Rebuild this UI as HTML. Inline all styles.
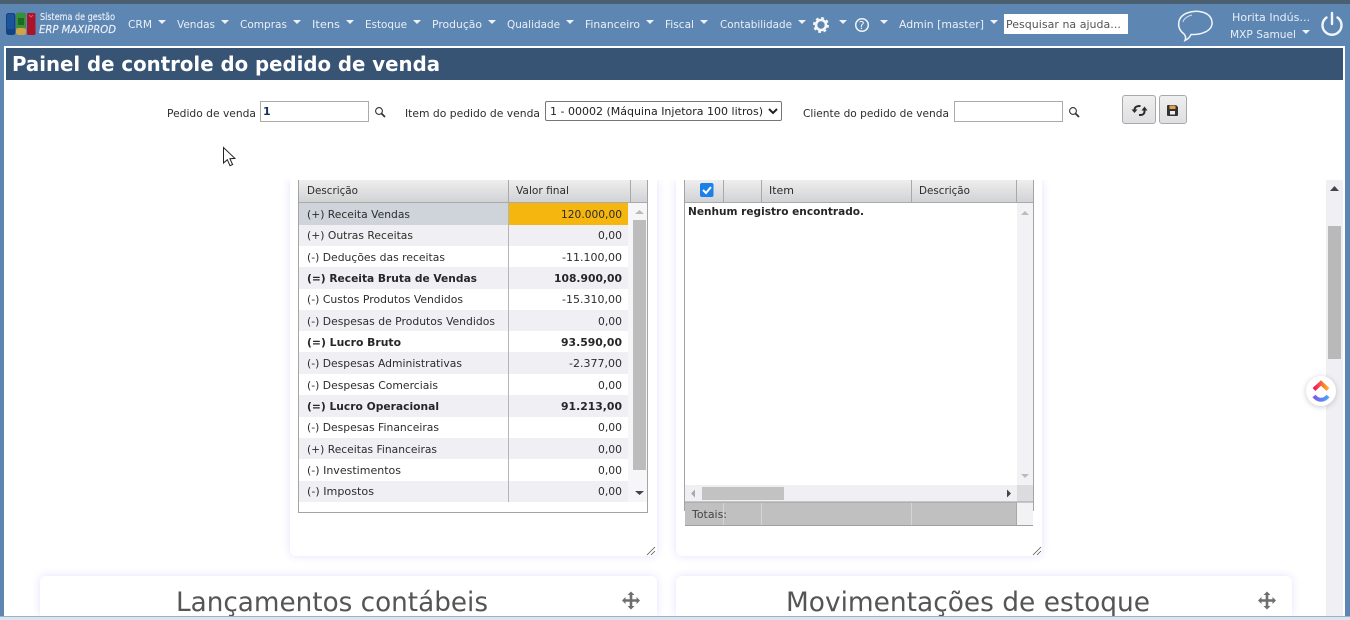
<!DOCTYPE html>
<html lang="pt-BR"><head><meta charset="utf-8"><title>Painel de controle do pedido de venda</title>
<style>
html,body{margin:0;padding:0;width:1350px;height:620px;overflow:hidden;background:#fff;font-family:"DejaVu Sans","Liberation Sans",sans-serif}
.a{position:absolute}
#nav{left:0;top:0;width:1350px;height:620px;background:#5e86b3}
#top{left:0;top:0;width:1350px;height:4px;background:#4a6070}
#main{left:4px;top:46px;width:1341px;height:570px;background:#fff}
#title{left:6px;top:48px;width:1337px;height:32px;background:#385474}
#foot{left:0;top:616px;width:1350px;height:4px;background:#dbe4ef;border-top:1px solid #9fb0c4;box-sizing:border-box}
#clip{left:4px;top:180px;width:1322px;height:436px;overflow:hidden;contain:paint}
.p{background:#fff;box-shadow:0 0 9px rgba(110,110,255,.2);position:absolute}
input,select{position:absolute;box-sizing:border-box;margin:0;font-family:"DejaVu Sans",sans-serif;font-size:11px;color:#222;background:#fff}
input{border:1px solid #aaa;padding:0 2px;outline:0}
svg{position:absolute;left:0;top:0}
text{font-family:"DejaVu Sans",sans-serif;font-size:11px;fill:#2c2c2c}
.n text,text.n{fill:#e9eff6}
.b{font-weight:bold;fill:#262626}
.btn{position:absolute;top:95px;height:29px;box-sizing:border-box;background:linear-gradient(#efeff0,#dfdfe1);border:1px solid #a9a9a9;border-radius:3px}
</style></head><body>
<div class="a" id="nav"></div><div class="a" id="top"></div><div class="a" id="main"></div><div class="a" id="title"></div>
<div class="a" id="clip">
<div class="p" style="left:286px;top:0;width:367px;height:376px;border-radius:0 0 6px 6px"></div>
<div class="p" style="left:672px;top:0;width:366px;height:376px;border-radius:0 0 6px 6px"></div>
<div class="p" style="left:36px;top:396px;width:617px;height:40px;border-radius:6px 6px 0 0"></div>
<div class="p" style="left:672px;top:396px;width:616px;height:40px;border-radius:6px 6px 0 0"></div>
</div>
<input style="left:260px;top:101px;width:109px;height:21px;color:#14315a;font-weight:bold" value="1">
<input style="left:954px;top:101px;width:109px;height:21px" value="">
<select style="left:545px;top:101px;width:237px;height:20px;border:1px solid #767676;border-radius:2px;padding:0"><option>1 - 00002 (Máquina Injetora 100 litros)</option></select>
<input style="left:1004px;top:14px;width:124px;height:20px;border:0;padding:0 2px;letter-spacing:.02px;color:#555" value="Pesquisar na ajuda...">
<div class="btn" style="left:1122px;width:34px"></div><div class="btn" style="left:1159px;width:28px"></div>
<div class="a" id="foot"></div>
<svg width="1350" height="620" viewBox="0 0 1350 620">
<defs><linearGradient id="h" x1="0" y1="0" x2="0" y2="1"><stop offset="0" stop-color="#eeeeef"/><stop offset="1" stop-color="#d0d1d3"/></linearGradient>
<linearGradient id="cu1" x1="0" x2="1"><stop offset="0" stop-color="#f0125f"/><stop offset="1" stop-color="#ffb020"/></linearGradient>
<linearGradient id="cu2" x1="0" x2="1"><stop offset="0" stop-color="#7b5be8"/><stop offset="1" stop-color="#49a6f2"/></linearGradient></defs>
<!-- logo -->
<rect x="6" y="13" width="9.500" height="22" rx="2.500" fill="#15437f"/><rect x="7" y="14" width="7" height="15" rx="1.500" fill="#1a559c"/>
<rect x="16" y="12.500" width="10" height="16" rx="2" fill="#3a8f3f"/><rect x="18" y="18" width="6" height="7" fill="#1c6a22"/><rect x="16" y="28" width="10" height="7" rx="2.500" fill="#cfa446"/>
<rect x="27" y="13" width="8.500" height="22" rx="1.500" fill="#a9142a"/><path d="M29 15l2 2 2-2" stroke="#e8506a" fill="none"/>
<g class="n">
<text x="40" y="20" textLength="75" lengthAdjust="spacingAndGlyphs" style="font-size:10px;stroke:#e9eff6;stroke-width:.15">Sistema de gestão</text>
<text x="39" y="33" textLength="77" lengthAdjust="spacingAndGlyphs" style="font-size:11px;font-style:italic;stroke:#e9eff6;stroke-width:.2">ERP MAXIPROD</text>
<text x="128" y="28" textLength="24" lengthAdjust="spacingAndGlyphs">CRM</text>
<text x="177" y="28" textLength="38" lengthAdjust="spacingAndGlyphs">Vendas</text>
<text x="240" y="28" textLength="47" lengthAdjust="spacingAndGlyphs">Compras</text>
<text x="312" y="28" textLength="28" lengthAdjust="spacingAndGlyphs">Itens</text>
<text x="365" y="28" textLength="42" lengthAdjust="spacingAndGlyphs">Estoque</text>
<text x="432" y="28" textLength="50" lengthAdjust="spacingAndGlyphs">Produção</text>
<text x="507" y="28" textLength="53" lengthAdjust="spacingAndGlyphs">Qualidade</text>
<text x="585" y="28" textLength="55" lengthAdjust="spacingAndGlyphs">Financeiro</text>
<text x="665" y="28" textLength="29" lengthAdjust="spacingAndGlyphs">Fiscal</text>
<text x="720" y="28" textLength="72" lengthAdjust="spacingAndGlyphs">Contabilidade</text>
<text x="899" y="28" textLength="85" lengthAdjust="spacingAndGlyphs">Admin [master]</text>
<text x="1232" y="21" textLength="78" lengthAdjust="spacingAndGlyphs">Horita Indús...</text>
<text x="1230" y="38" textLength="66" lengthAdjust="spacingAndGlyphs">MXP Samuel</text>
</g>
<g fill="#eef3f8">
<path d="M158 20h8l-4 4zM221 20h8l-4 4zM293 20h8l-4 4zM346 20h8l-4 4zM413 20h8l-4 4zM488 20h8l-4 4zM566 20h8l-4 4zM646 20h8l-4 4zM700 20h8l-4 4zM798 20h8l-4 4zM839 20h8l-4 4zM880 20h8l-4 4zM990 20h8l-4 4zM1302 30h8l-4 4z"/>
</g>
<!-- gear -->
<circle cx="821" cy="25" r="5" fill="none" stroke="#f4f7fa" stroke-width="2.600"/>
<circle cx="821" cy="25" r="6.800" fill="none" stroke="#f4f7fa" stroke-width="2.400" stroke-dasharray="2.700 2.640"/>
<!-- help -->
<circle cx="862" cy="25" r="6.300" fill="none" stroke="#f1f5f9" stroke-width="1.500"/>
<text x="858.700" y="29" class="n" style="font-size:11px;fill:#f1f5f9">?</text>
<!-- chat -->
<path d="M1184 34C1176 28 1177 17 1187 13C1197 9 1211 12 1212 22C1213 31 1201 35 1191 34.500C1190 37 1188 39 1185 40.500C1186 38 1186 36 1184 34Z" fill="none" stroke="#f0f4f8" stroke-width="1.500"/>
<path d="M1183 22C1184 18 1188 16 1192 15" fill="none" stroke="#cfdcea" stroke-width="1"/>
<!-- power -->
<path d="M1326.500 17.500a9.500 9.500 0 1 0 11 0" fill="none" stroke="#f2f6fa" stroke-width="2.400" stroke-linecap="round"/>
<path d="M1332 13v11" stroke="#f2f6fa" stroke-width="2.400" stroke-linecap="round"/>
<!-- title -->
<text x="12" y="71" textLength="428" lengthAdjust="spacingAndGlyphs" style="font-size:20px;font-weight:bold;fill:#fff">Painel de controle do pedido de venda</text>
<!-- filters -->
<text x="167" y="117" textLength="89" lengthAdjust="spacingAndGlyphs">Pedido de venda</text>
<text x="405" y="117" textLength="135" lengthAdjust="spacingAndGlyphs">Item do pedido de venda</text>
<text x="803" y="117" textLength="146" lengthAdjust="spacingAndGlyphs">Cliente do pedido de venda</text>
<g fill="none" stroke="#333"><circle cx="379" cy="111" r="3.400" stroke-width="1.100"/><path d="M381.500 113.500l3.500 3.500" stroke-width="1.800"/><circle cx="1073" cy="111" r="3.400" stroke-width="1.100"/><path d="M1075.500 113.500l3.500 3.500" stroke-width="1.800"/></g>
<!-- button icons -->
<g fill="none" stroke="#2c2c2c" stroke-width="2"><path d="M1134.500 110c0-2.500 2-4 4.500-4h1.500"/><path d="M1144.500 110.500v1c0 2.200-1.800 3.500-4 3.500h-1.500"/></g>
<path d="M1131.500 109.500h6l-3 3.500zM1141.500 110.500h6l-3-4z" fill="#2c2c2c"/>
<path d="M1168 105h8l2 2v8a1 1 0 0 1-1 1h-9a1 1 0 0 1-1-1v-9a1 1 0 0 1 1-1z" fill="#333"/><rect x="1169.500" y="105.500" width="6" height="3.500" fill="#e0a050"/><rect x="1170" y="111" width="5" height="3.500" fill="#eee"/>
<!-- cursor -->
<path d="M223.500 147.500v15.500l3.800-3.300 2.700 6 2.600-1.200-2.700-5.800 5-.3z" fill="#fff" stroke="#222" stroke-width="1"/>
<!-- left table -->
<rect x="299" y="180" width="349" height="23" fill="url(#h)"/><rect x="298" y="202" width="350" height="1" fill="#aaa"/>
<path d="M508.500 180v22M630.500 180v22" stroke="#a9a9a9"/>
<text x="307" y="194" textLength="51" lengthAdjust="spacingAndGlyphs">Descrição</text>
<text x="516" y="194" textLength="53" lengthAdjust="spacingAndGlyphs">Valor final</text>
<rect x="299" y="203" width="209" height="22" fill="#cfd4da"/><rect x="509" y="203" width="119" height="22" fill="#f5b60f"/>
<g fill="#f0f0f4"><rect x="299" y="225" width="329" height="21"/><rect x="299" y="267" width="329" height="22"/><rect x="299" y="310" width="329" height="21"/><rect x="299" y="352" width="329" height="22"/><rect x="299" y="395" width="329" height="22"/><rect x="299" y="438" width="329" height="21"/><rect x="299" y="481" width="329" height="21"/></g>
<path d="M508.500 203v299" stroke="#b5b5b8"/>
<rect x="628" y="203" width="19" height="299" fill="#f6f6f8"/>
<rect x="633" y="220" width="13" height="250" fill="#bcbcbc"/>
<path d="M635 214l4.500-4 4.500 4z" fill="#bbb"/><path d="M635 491l4.500 4 4.500-4z" fill="#444"/>
<path d="M298.500 180v332.500h349V180" fill="none" stroke="#a4a4a4"/>
<text x="307" y="218" textLength="103" lengthAdjust="spacingAndGlyphs">(+) Receita Vendas</text>
<text x="307" y="239" textLength="106" lengthAdjust="spacingAndGlyphs">(+) Outras Receitas</text>
<text x="307" y="261" textLength="138" lengthAdjust="spacingAndGlyphs">(-) Deduções das receitas</text>
<text x="307" y="282" textLength="170" lengthAdjust="spacingAndGlyphs" class="b">(=) Receita Bruta de Vendas</text>
<text x="307" y="303" textLength="156" lengthAdjust="spacingAndGlyphs">(-) Custos Produtos Vendidos</text>
<text x="307" y="325" textLength="188" lengthAdjust="spacingAndGlyphs">(-) Despesas de Produtos Vendidos</text>
<text x="307" y="346" textLength="94" lengthAdjust="spacingAndGlyphs" class="b">(=) Lucro Bruto</text>
<text x="307" y="367" textLength="155" lengthAdjust="spacingAndGlyphs">(-) Despesas Administrativas</text>
<text x="307" y="389" textLength="131" lengthAdjust="spacingAndGlyphs">(-) Despesas Comerciais</text>
<text x="307" y="410" textLength="132" lengthAdjust="spacingAndGlyphs" class="b">(=) Lucro Operacional</text>
<text x="307" y="431" textLength="132" lengthAdjust="spacingAndGlyphs">(-) Despesas Financeiras</text>
<text x="307" y="453" textLength="130" lengthAdjust="spacingAndGlyphs">(+) Receitas Financeiras</text>
<text x="307" y="474" textLength="94" lengthAdjust="spacingAndGlyphs">(-) Investimentos</text>
<text x="307" y="495" textLength="67" lengthAdjust="spacingAndGlyphs">(-) Impostos</text>
<text x="561" y="218" textLength="61" lengthAdjust="spacingAndGlyphs">120.000,00</text>
<text x="598" y="239" textLength="24" lengthAdjust="spacingAndGlyphs">0,00</text>
<text x="562" y="261" textLength="60" lengthAdjust="spacingAndGlyphs">-11.100,00</text>
<text x="554" y="282" textLength="68" lengthAdjust="spacingAndGlyphs" class="b">108.900,00</text>
<text x="562" y="303" textLength="60" lengthAdjust="spacingAndGlyphs">-15.310,00</text>
<text x="598" y="325" textLength="24" lengthAdjust="spacingAndGlyphs">0,00</text>
<text x="561" y="346" textLength="61" lengthAdjust="spacingAndGlyphs" class="b">93.590,00</text>
<text x="569" y="367" textLength="53" lengthAdjust="spacingAndGlyphs">-2.377,00</text>
<text x="598" y="389" textLength="24" lengthAdjust="spacingAndGlyphs">0,00</text>
<text x="561" y="410" textLength="61" lengthAdjust="spacingAndGlyphs" class="b">91.213,00</text>
<text x="598" y="431" textLength="24" lengthAdjust="spacingAndGlyphs">0,00</text>
<text x="598" y="453" textLength="24" lengthAdjust="spacingAndGlyphs">0,00</text>
<text x="598" y="474" textLength="24" lengthAdjust="spacingAndGlyphs">0,00</text>
<text x="598" y="495" textLength="24" lengthAdjust="spacingAndGlyphs">0,00</text>
<!-- right table -->
<rect x="684" y="180" width="349" height="23" fill="url(#h)"/><rect x="684" y="202" width="349" height="1" fill="#aaa"/>
<path d="M723.500 180v22M761.500 180v22M911.500 180v22M1016.500 180v22" stroke="#a9a9a9"/>
<rect x="700" y="183" width="13.500" height="14" rx="2" fill="#1b80ea"/><path d="M703 190l3 3 5-6" fill="none" stroke="#fff" stroke-width="2"/>
<text x="769" y="194" textLength="25" lengthAdjust="spacingAndGlyphs">Item</text>
<text x="919" y="194" textLength="51" lengthAdjust="spacingAndGlyphs">Descrição</text>
<text x="688" y="215" textLength="176" lengthAdjust="spacingAndGlyphs" class="b">Nenhum registro encontrado.</text>
<rect x="1017" y="203" width="16" height="282" fill="#f2f2f5"/>
<path d="M1021 215l4-4 4 4z" fill="#bbb"/><path d="M1021 474l4 4 4-4z" fill="#bbb"/>
<rect x="685" y="485" width="332" height="17" fill="#f0f0f4"/><rect x="1017" y="485" width="16" height="17" fill="#dcdcde"/>
<rect x="702" y="487" width="82" height="13" fill="#c2c2c2"/>
<path d="M695 489.500v8l-4-4z" fill="#aaa"/><path d="M1007 489.500v8l4-4z" fill="#444"/>
<rect x="685" y="502" width="332" height="23" fill="#c0c0c0"/><rect x="1017" y="502" width="16" height="23" fill="#f2f2f4"/>
<rect x="684" y="501.500" width="349" height="1" fill="#9d9d9d"/><rect x="685" y="525" width="348" height="1" fill="#a0a0a0"/>
<path d="M723.500 503v22M761.500 503v22M911.500 503v22" stroke="#d5d5d5"/><path d="M1016.500 503v22" stroke="#a8a8a8"/>
<path d="M684.500 180v331M1033.500 180v331" stroke="#a4a4a4"/>
<text x="692" y="518" textLength="35" lengthAdjust="spacingAndGlyphs" style="fill:#444">Totais:</text>
<!-- resize -->
<path d="M647 555l8-8M651 555l4-4" stroke="#555" stroke-width=".8"/><path d="M1033 555l8-8M1037 555l4-4" stroke="#555" stroke-width=".8"/>
<!-- lower panels titles clipped to 616 -->
<clipPath id="c"><rect x="0" y="570" width="1350" height="46"/></clipPath>
<g clip-path="url(#c)">
<text x="176" y="611" textLength="312" lengthAdjust="spacingAndGlyphs" style="font-size:27px;fill:#555">Lançamentos contábeis</text>
<text x="786" y="611" textLength="364" lengthAdjust="spacingAndGlyphs" style="font-size:27px;fill:#555">Movimentações de estoque</text>
</g>
<g fill="#6e6e6e">
<path d="M631 591.500l3.500 3.500h-2.200v4.200h4.200V597l3.500 3.500-3.500 3.500v-2.200h-4.200v4.200h2.200l-3.500 3.500-3.500-3.500h2.200v-4.200h-4.200v2.200l-3.500-3.500 3.500-3.500v2.200h4.200V595h-2.200z"/>
<path d="M1267 591.500l3.500 3.500h-2.200v4.200h4.200V597l3.500 3.500-3.500 3.500v-2.200h-4.200v4.200h2.200l-3.500 3.500-3.500-3.500h2.200v-4.200h-4.200v2.200l-3.500-3.500 3.500-3.500v2.200h4.200V595h-2.200z"/>
</g>
<!-- page scrollbar -->
<rect x="1326" y="180" width="17" height="436" fill="#f0f0f4"/>
<rect x="1328" y="226" width="13" height="133" fill="#b9b9b9"/>
<path d="M1330 191l4.500-5 4.500 5z" fill="#444"/>
<!-- clickup -->
<circle cx="1321" cy="391" r="15" fill="#fff" style="filter:drop-shadow(0 1px 3px rgba(0,0,0,.2))"/>
<path d="M1314 389.500l7-6.500 7 6.500" fill="none" stroke="url(#cu1)" stroke-width="4"/>
<path d="M1314 396c4 5 10 5 14 0" fill="none" stroke="url(#cu2)" stroke-width="4"/>
</svg>
</body></html>
